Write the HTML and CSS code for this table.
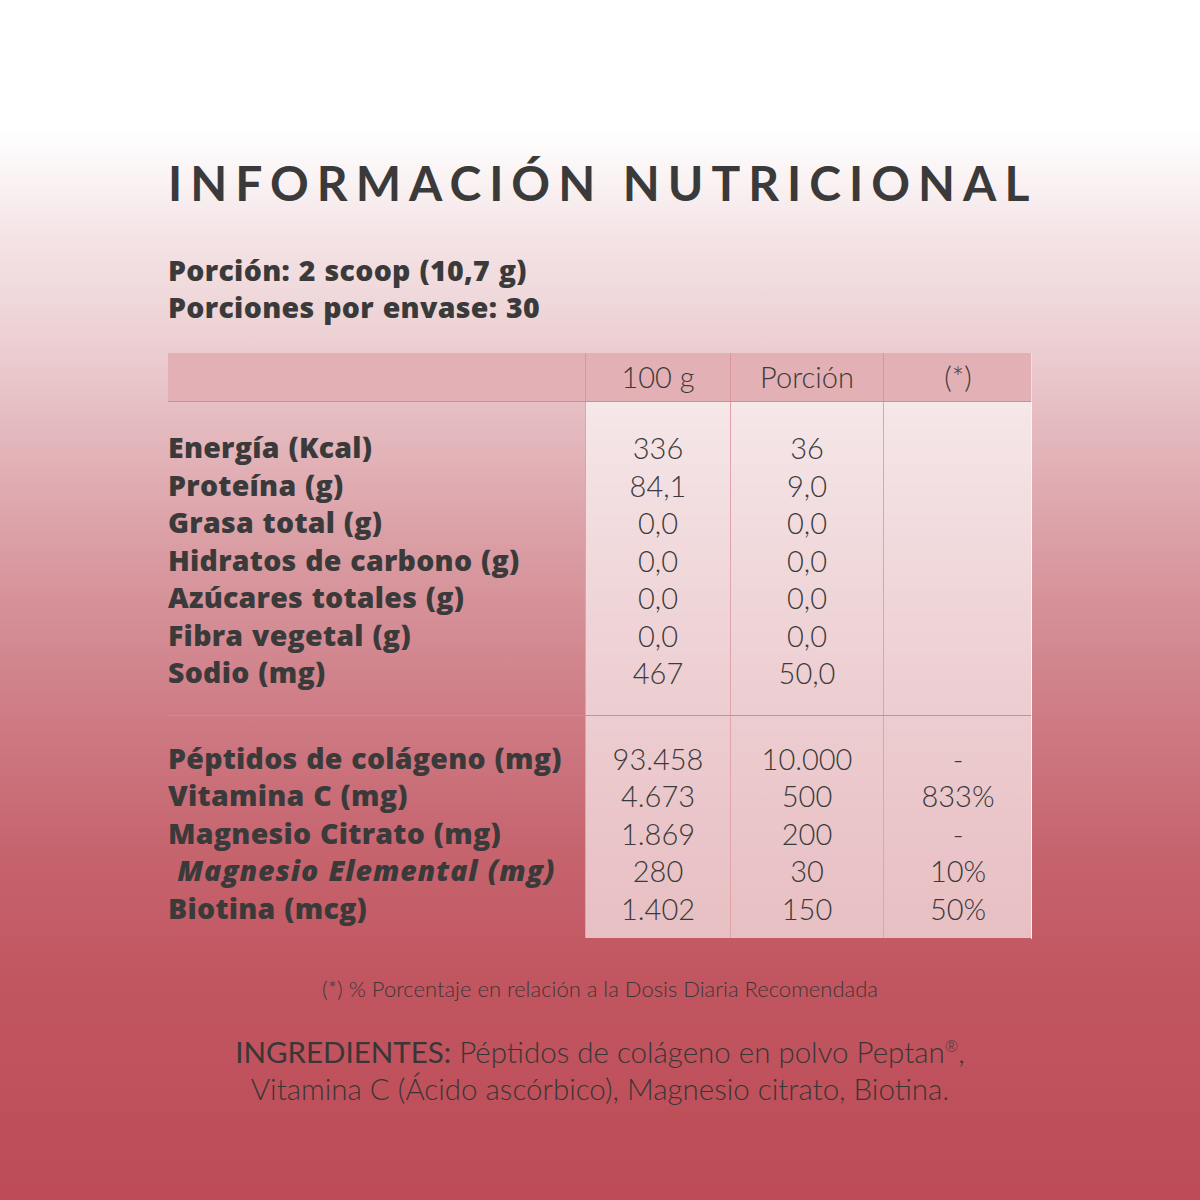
FILE: index.html
```html
<!DOCTYPE html>
<html lang="es">
<head>
<meta charset="utf-8">
<title>Información nutricional</title>
<link rel="stylesheet" href="styles.css">
</head>
<body>
<main class="page">
  <h1 class="title">INFORMACIÓN NUTRICIONAL</h1>
  <div class="serving">
    <p>Porción: 2 scoop (10,7 g)</p>
    <p>Porciones por envase: 30</p>
  </div>
  <div class="table">
    <div class="thead">
      <div class="th th-label"></div>
      <div class="th">100 g</div>
      <div class="th">Porción</div>
      <div class="th">(*)</div>
    </div>
    <div class="section s1">
      <div class="labels">
        <div>Energía (Kcal)</div>
        <div>Proteína (g)</div>
        <div>Grasa total (g)</div>
        <div>Hidratos de carbono (g)</div>
        <div>Azúcares totales (g)</div>
        <div>Fibra vegetal (g)</div>
        <div>Sodio (mg)</div>
      </div>
      <div class="vals">
        <div>336</div><div>84,1</div><div>0,0</div><div>0,0</div><div>0,0</div><div>0,0</div><div>467</div>
      </div>
      <div class="vals">
        <div>36</div><div>9,0</div><div>0,0</div><div>0,0</div><div>0,0</div><div>0,0</div><div>50,0</div>
      </div>
      <div class="vals last"></div>
    </div>
    <div class="section s2">
      <div class="labels">
        <div>Péptidos de colágeno (mg)</div>
        <div>Vitamina C (mg)</div>
        <div>Magnesio Citrato (mg)</div>
        <div class="ital">&nbsp;Magnesio Elemental (mg)</div>
        <div>Biotina (mcg)</div>
      </div>
      <div class="vals">
        <div>93.458</div><div>4.673</div><div>1.869</div><div>280</div><div>1.402</div>
      </div>
      <div class="vals">
        <div>10.000</div><div>500</div><div>200</div><div>30</div><div>150</div>
      </div>
      <div class="vals last">
        <div>-</div><div>833%</div><div>-</div><div>10%</div><div>50%</div>
      </div>
    </div>
  </div>
  <p class="note">(*) % Porcentaje en relación a la Dosis Diaria Recomendada</p>
  <p class="ingredients"><span class="ing-head">INGREDIENTES:</span> Péptidos de colágeno en polvo Peptan<sup>®</sup>,<br>Vitamina C (Ácido ascórbico), Magnesio citrato, Biotina.</p>
</main>
</body>
</html>
```

FILE: styles.css
```css
html, body {
  margin: 0;
  padding: 0;
}
body {
  width: 1200px;
  height: 1200px;
  overflow: hidden;
  font-family: "Lato", "Liberation Sans", sans-serif;
  color: #3b3a3a;
  background: linear-gradient(to bottom,
    #ffffff 0px,
    #ffffff 130px,
    #f4e3e5 240px,
    #ecd0d3 340px,
    #e4b9be 430px,
    #d99aa1 560px,
    #cf7e87 700px,
    #c6646e 850px,
    #c15660 980px,
    #bd4c57 1200px);
}
.page {
  width: 864px;
  margin-left: 168px;
  padding-top: 155px;
}
.title {
  margin: 0;
  font-size: 48px;
  font-weight: 700;
  letter-spacing: 8px;
  line-height: 56px;
  white-space: nowrap;
}
.serving {
  margin-top: 41px;
}
.serving p {
  margin: 0;
  font-family: "Open Sans", "Lato", sans-serif;
  font-size: 28.5px;
  font-weight: 800;
  line-height: 37px;
  letter-spacing: 0.3px;
  word-spacing: 1px;
}
.table {
  margin-top: 27px;
  border-right: 1px solid #f3dcde;
}
.thead {
  display: grid;
  grid-template-columns: 417px 145px 153px 149px;
  height: 48px;
  background: #e3b0b5;
  border-bottom: 1px solid #d68a91;
}
.th {
  font-size: 29px;
  font-weight: 300;
  line-height: 48px;
  text-align: center;
  border-left: 1px solid #d9979d;
}
.th-label {
  border-left: none;
}
.section {
  display: grid;
  grid-template-columns: 417px 145px 153px 149px;
}
.s1 {
  border-bottom: 1px solid #dd848c;
}
.s2 {
  border-bottom: 1px solid rgba(200, 90, 100, 0.5);
}
.labels {
  font-family: "Open Sans", "Lato", sans-serif;
  font-size: 28.5px;
  font-weight: 800;
  line-height: 37.5px;
  letter-spacing: 0.25px;
  word-spacing: 1px;
  white-space: nowrap;
}
.ital {
  font-style: italic;
  letter-spacing: 0.9px;
}
.vals {
  background: rgba(255, 255, 255, 0.62);
  border-left: 1px solid #e0a3a9;
  font-size: 29px;
  font-weight: 300;
  line-height: 37.5px;
  text-align: center;
}
.s1 .labels, .s1 .vals {
  padding-top: 27px;
  padding-bottom: 23px;
}
.s2 .labels, .s2 .vals {
  padding-top: 24px;
  padding-bottom: 11px;
}
.note {
  margin: 36px 0 0;
  text-align: center;
  font-size: 22px;
  font-weight: 300;
  line-height: 28px;
  color: #3f3536;
}
.ingredients {
  margin: 30px 0 0;
  text-align: center;
  font-size: 29.5px;
  font-weight: 300;
  line-height: 37px;
  color: #3a3636;
}
.ing-head {
  font-weight: 400;
}
.ingredients sup {
  font-size: 16px;
  line-height: 0;
}
```
